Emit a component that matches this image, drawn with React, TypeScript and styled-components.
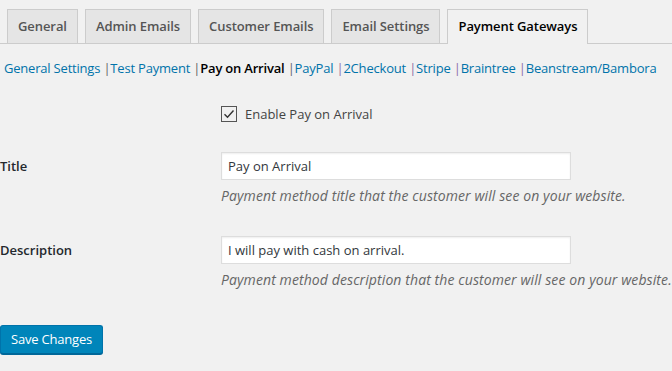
import React from "react";
import styled, { createGlobalStyle } from "styled-components";

const Global = createGlobalStyle`
  html, body { margin: 0; padding: 0; background: #f1f1f1; }
  body { font-family: "Open Sans", "Noto Sans", sans-serif; color: #444; font-size: 13px; }
  * { box-sizing: border-box; }
`;

const Page = styled.div`
  width: 672px;
  height: 371px;
  overflow: hidden;
  padding-top: 9px;
`;

const TabBar = styled.nav`
  display: flex;
  align-items: flex-end;
  border-bottom: 1px solid #ccc;
  height: 35px;
`;

const Tab = styled.a<{ $active?: boolean }>`
  display: block;
  margin-left: 7px;
  height: ${(p) => (p.$active ? "35px" : "34px")};
  padding: 4px 10px 0;
  font-size: 13px;
  letter-spacing: -0.08px;
  line-height: 24px;
  font-weight: 600;
  border: 1px solid #ccc;
  border-bottom: none;
  background: ${(p) => (p.$active ? "#f1f1f1" : "#e5e5e5")};
  color: ${(p) => (p.$active ? "#000" : "#555")};
  margin-bottom: ${(p) => (p.$active ? "-1px" : "0")};
  text-decoration: none;
  white-space: nowrap;
`;

const SubNav = styled.ul`
  list-style: none;
  margin: 0;
  padding: 14px 0 0 4px;
  display: flex;
  font-size: 13px;
  letter-spacing: -0.2px;
  line-height: 20px;
  white-space: pre;
`;

const SubItem = styled.li`
  margin: 0;
`;

const SubLink = styled.a<{ $current?: boolean }>`
  color: ${(p) => (p.$current ? "#000" : "#0073aa")};
  font-weight: ${(p) => (p.$current ? 600 : 400)};
  text-decoration: none;
`;

const Sep = styled.span<{ $visited?: boolean }>`
  color: ${(p) => (p.$visited ? "#8c6fa8" : "#666")};
`;

const Form = styled.div`
  display: grid;
  grid-template-columns: 221px 1fr;
  margin-top: 27px;
`;

const Label = styled.div`
  font-size: 13px;
  font-weight: 600;
  color: #23282d;
  display: flex;
  align-items: center;
  height: 28px;
`;

const Cell = styled.div<{ $mb: number }>`
  display: flex;
  flex-direction: column;
  margin-bottom: ${(p) => p.$mb}px;
`;

const CheckRow = styled.label`
  display: flex;
  align-items: center;
  gap: 8px;
  font-size: 13px;
  color: #444;
  height: 16px;
  margin-top: 1px;
`;

const Box = styled.span`
  width: 16px;
  height: 16px;
  border: 1px solid #555;
  display: flex;
  align-items: center;
  justify-content: center;
`;

const Input = styled.input`
  width: 350px;
  height: 28px;
  border: 1px solid #ddd;
  box-shadow: inset 0 1px 2px rgba(0, 0, 0, 0.07);
  background: #fff;
  padding: 2px 6px;
  font-family: inherit;
  font-size: 13px;
  color: #32373c;
  outline: none;
`;

const Help = styled.p`
  margin: 6px 0 0;
  font-size: 14px;
  letter-spacing: 0.1px;
  font-style: italic;
  color: #666;
  line-height: 20px;
  white-space: nowrap;
`;

const Button = styled.button`
  margin-top: 35px;
  height: 29px;
  width: 103px;
  padding: 0 10px 1px;
  background: #0085ba;
  border: 1px solid #0073aa;
  border-bottom-color: #006799;
  box-shadow: 0 1px 0 #006799;
  border-radius: 3px;
  color: #fff;
  font-family: inherit;
  font-size: 13px;
  letter-spacing: -0.2px;
  line-height: 26px;
  white-space: nowrap;
`;

const tabs = ["General", "Admin Emails", "Customer Emails", "Email Settings", "Payment Gateways"];
const links: { t: string; cur?: boolean; v?: boolean }[] = [
  { t: "General Settings" },
  { t: "Test Payment" },
  { t: "Pay on Arrival", cur: true },
  { t: "PayPal" },
  { t: "2Checkout", v: true },
  { t: "Stripe", v: true },
  { t: "Braintree", v: true },
  { t: "Beanstream/Bambora", v: true },
];

export default function App() {
  return (
    <Page>
      <Global />
      <TabBar>
        {tabs.map((t, i) => (
          <Tab key={t} $active={i === tabs.length - 1}>
            {t}
          </Tab>
        ))}
      </TabBar>
      <SubNav>
        {links.map((l, i) => (
          <SubItem key={l.t}>
            {i > 0 && <Sep $visited={l.v}>{" |"}</Sep>}
            <SubLink $current={l.cur}>{l.t}</SubLink>
          </SubItem>
        ))}
      </SubNav>
      <Form>
        <div />
        <Cell $mb={30}>
          <CheckRow>
            <Box>
              <svg width="12" height="10" viewBox="0 0 12 10">
                <path d="M1.5 5.2 L4.5 8.2 L10.5 1.5" fill="none" stroke="#333" strokeWidth="1.4" />
              </svg>
            </Box>
            Enable Pay on Arrival
          </CheckRow>
        </Cell>
        <Label>Title</Label>
        <Cell $mb={30}>
          <Input defaultValue="Pay on Arrival" />
          <Help>Payment method title that the customer will see on your website.</Help>
        </Cell>
        <Label>Description</Label>
        <Cell $mb={0}>
          <Input defaultValue="I will pay with cash on arrival." />
          <Help>Payment method description that the customer will see on your website.</Help>
        </Cell>
      </Form>
      <Button>Save Changes</Button>
    </Page>
  );
}
